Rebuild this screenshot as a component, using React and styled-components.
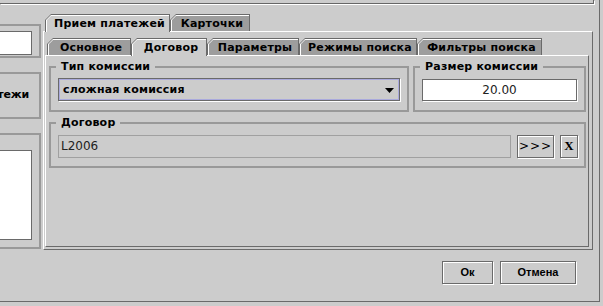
import styled, { createGlobalStyle } from 'styled-components'

const Global = createGlobalStyle`
  html, body { margin: 0; padding: 0; background: #cccccc; }
  body {
    font-family: "DejaVu Sans", "Noto Sans", sans-serif;
    font-size: 12px;
    color: #000;
    overflow: hidden;
  }
  * { box-sizing: border-box; }
`

const Frame = styled.div`
  width: 600px;
  height: 302px;
  border-right: 1px solid #6a6a6a;
  border-bottom: 1px solid #6a6a6a;
  display: flex;
  flex-direction: column;
  overflow: hidden;
`

const TopStrip = styled.div`
  width: 594px;
  height: 4px;
  border-right: 1px solid #666;
  border-bottom: 1px solid #666;
  box-shadow: 1px 1px 0 #fff;
`

const MainRow = styled.div`
  display: flex;
  align-items: flex-start;
  gap: 2px;
  height: 246px;
`

const LeftCol = styled.div`
  width: 41px;
  overflow: hidden;
  display: flex;
  flex-direction: column;
  padding-top: 20px;
  gap: 14px;
`

const SideBox = styled.div`
  margin-left: -30px;
  width: 71px;
  border: 2px solid #999;
  height: ${p => p.$h}px;
  padding: ${p => p.$pad};
  display: flex;
  justify-content: flex-end;
  align-items: ${p => p.$align || 'flex-start'};
`

const SideField = styled.div`
  width: 100%;
  height: ${p => p.$h}px;
  background: #fff;
  border: 1px solid #6a6a6a;
`

const SideLabel = styled.span`
  font-weight: bold;
  font-size: 11px;
  letter-spacing: -0.2px;
  white-space: nowrap;
`

const TabPane = styled.div`
  width: ${p => p.$w}px;
  margin-top: ${p => p.$top || 0}px;
`

const TabRow = styled.div`
  display: flex;
  align-items: flex-start;
  height: 17px;
  padding-left: 2px;
  position: relative;
  z-index: 2;
`

const TabOutline = styled.div`
  width: ${p => p.$w}px;
  height: ${p => (p.$active ? 18 : 17)}px;
  padding: 1px 1px 0 1px;
  background: #6a6a6a;
  clip-path: polygon(0 6px, 6px 0, 100% 0, 100% 100%, 0 100%);
  flex-shrink: 0;
`

const TabLight = styled.div`
  height: 100%;
  padding: 1px 0 0 1px;
  background: #fff;
  clip-path: polygon(0 5px, 5px 0, 100% 0, 100% 100%, 0 100%);
`

const TabFace = styled.div`
  height: 100%;
  background: ${p => (p.$active ? '#cccccc' : '#9d9d9d')};
  clip-path: polygon(0 4px, 4px 0, 100% 0, 100% 100%, 0 100%);
  display: flex;
  align-items: center;
  justify-content: center;
  padding: ${p => (p.$active ? '0 0 1px 3px' : '0 0 0 3px')};
  font-weight: bold;
  font-size: 11px;
  line-height: 14px;
  letter-spacing: 0.2px;
  white-space: nowrap;
`

const TabBody = styled.div`
  height: ${p => p.$h}px;
  border-top: 1px solid #fff;
  border-left: 1px solid #fff;
  border-right: 1px solid #6a6a6a;
  border-bottom: 1px solid #6a6a6a;
  padding: ${p => p.$pad};
`

const Rows = styled.div`
  display: flex;
  flex-direction: column;
  gap: 4px;
`

const Row = styled.div`
  display: flex;
  gap: 4px;
`

const Group = styled.fieldset`
  margin: 0;
  min-width: 0;
  border: 2px solid #999;
  padding: ${p => p.$pad};
  width: ${p => (p.$w ? `${p.$w}px` : 'auto')};
  flex: ${p => (p.$w ? 'none' : '1')};
`

const GroupTitle = styled.legend`
  margin-left: -2px;
  padding: 0 5px;
  font-weight: bold;
  font-size: 11px;
  line-height: 14px;
  letter-spacing: 0.2px;
`

const Combo = styled.div`
  height: 23px;
  display: flex;
  align-items: center;
  justify-content: space-between;
  padding: 0 5px 1px 4px;
  border: 1px solid #6a6a6a;
  box-shadow: inset 0 0 0 1px #a9a9dc, 1px 1px 0 #fff;
  font-weight: bold;
  font-size: 11px;
  letter-spacing: 0.2px;
`

const Arrow = styled.svg`
  width: 9px;
  height: 5px;
  margin-top: 2px;
`

const Input = styled.div`
  height: ${p => p.$h || 23}px;
  margin-top: ${p => p.$mt || 0}px;
  display: flex;
  align-items: center;
  justify-content: ${p => (p.$center ? 'center' : 'flex-start')};
  padding: 0 2px 1px;
  flex: 1;
  background: ${p => (p.$readonly ? '#cccccc' : '#fff')};
  border: 1px solid ${p => (p.$readonly ? '#a0a0a0' : '#6a6a6a')};
  box-shadow: ${p => (p.$readonly ? 'none' : '1px 1px 0 #fff')};
  color: #222;
`

const FieldRow = styled.div`
  display: flex;
  align-items: flex-start;
  gap: 6px;
`

const Button = styled.button`
  all: unset;
  box-sizing: border-box;
  height: ${p => p.$h || 23}px;
  width: ${p => p.$w}px;
  display: flex;
  align-items: center;
  justify-content: center;
  background: #cccccc;
  border: 1px solid #6a6a6a;
  box-shadow: inset 1px 1px 0 #fff, 1px 1px 0 #fff;
  font-family: ${p => p.$font || '"DejaVu Sans", sans-serif'};
  font-weight: ${p => (p.$bold ? 'bold' : 'normal')};
  font-size: ${p => p.$size || 12}px;
  color: #000;
  letter-spacing: ${p => p.$ls || 0}px;
  padding-bottom: 1px;
`

const ButtonRow = styled.div`
  display: flex;
  justify-content: flex-end;
  gap: 7px;
  padding: 11px 23px 0 0;
`

const outerTabs = [
  { label: 'Прием платежей', w: 125, active: true },
  { label: 'Карточки', w: 80 },
]

const innerTabs = [
  { label: 'Основное', w: 84 },
  { label: 'Договор', w: 76, active: true },
  { label: 'Параметры', w: 92 },
  { label: 'Режимы поиска', w: 118 },
  { label: 'Фильтры поиска', w: 125 },
]

function Tabs({ items }) {
  return (
    <TabRow>
      {items.map(t => (
        <TabOutline key={t.label} $w={t.w} $active={t.active}>
          <TabLight>
            <TabFace $active={t.active}>{t.label}</TabFace>
          </TabLight>
        </TabOutline>
      ))}
    </TabRow>
  )
}

export default function App() {
  return (
    <>
      <Global />
      <Frame>
        <TopStrip />
        <MainRow>
          <LeftCol>
            <SideBox $h={34} $pad="5px 7px 0 0">
              <SideField $h={24} />
            </SideBox>
            <SideBox $h={47} $pad="0 10px 2px 0" $align="center">
              <SideLabel>Платежи</SideLabel>
            </SideBox>
            <SideBox $h={116} $pad="15px 7px 0 0">
              <SideField $h={90} />
            </SideBox>
          </LeftCol>

          <TabPane $w={550} $top={10}>
            <Tabs items={outerTabs} />
            <TabBody $h={219} $pad="6px 3px 2px 1px">
              <TabPane $w={544}>
                <Tabs items={innerTabs} />
                <TabBody $h={192} $pad="4px 2px 0 3px">
                  <Rows>
                    <Row>
                      <Group $w={360} $pad="4px 7px 9px 7px">
                        <GroupTitle>Тип комиссии</GroupTitle>
                        <Combo>
                          <span>сложная комиссия</span>
                          <Arrow viewBox="0 0 9 5">
                            <path d="M0 0H9L4.5 5Z" fill="#000" />
                          </Arrow>
                        </Combo>
                      </Group>
                      <Group $w={173} $pad="4px 7px 9px 7px">
                        <GroupTitle>Размер комиссии</GroupTitle>
                        <Input $center $mt={1} $h={22}>20.00</Input>
                      </Group>
                    </Row>
                    <Group $pad="5px 6px 8px 7px">
                      <GroupTitle>Договор</GroupTitle>
                      <FieldRow>
                        <Input $readonly>L2006</Input>
                        <Button $w={37} $ls={1}>&gt;&gt;&gt;</Button>
                        <Button $w={18} $bold $font='"Liberation Serif", serif' $size={13}>X</Button>
                      </FieldRow>
                    </Group>
                  </Rows>
                </TabBody>
              </TabPane>
            </TabBody>
          </TabPane>
        </MainRow>
        <ButtonRow>
          <Button $w={51} $bold $size={11} $font='"Liberation Sans", sans-serif'>Ок</Button>
          <Button $w={76} $bold $size={11} $font='"Liberation Sans", sans-serif'>Отмена</Button>
        </ButtonRow>
      </Frame>
    </>
  )
}
